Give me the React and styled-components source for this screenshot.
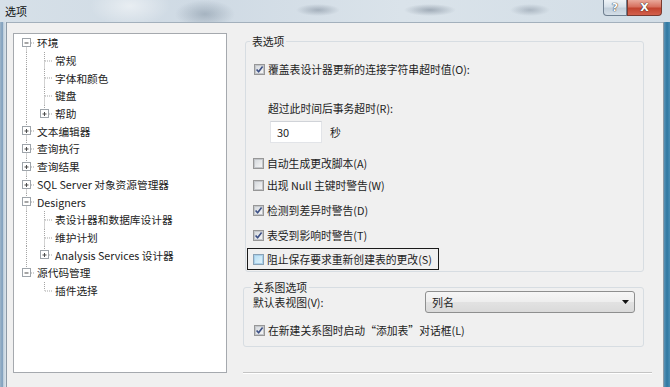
import React from 'react';
import styled, { createGlobalStyle } from 'styled-components';

const Global = createGlobalStyle`
  html, body { margin: 0; padding: 0; background: #f0f0f0; }
  body {
    font-family: "Noto Sans CJK SC", "Noto Sans", sans-serif;
    font-size: 11px;
    color: #1e1e1e;
  }
  * { box-sizing: border-box; }
`;

const Window = styled.div`
  width: 670px;
  height: 387px;
  overflow: hidden;
  display: flex;
  flex-direction: column;
  background: #d3dee7;
`;

const TitleBar = styled.div`
  height: 22px;
  flex: none;
  display: flex;
  align-items: flex-start;
  padding: 0 8px 0 5px;
  background:
    radial-gradient(ellipse 30px 14px at 205px 14px, rgba(70, 90, 110, 0.30), transparent),
    radial-gradient(ellipse 22px 6px at 318px 10px, rgba(60, 75, 95, 0.32), transparent),
    radial-gradient(ellipse 26px 6px at 430px 10px, rgba(60, 75, 95, 0.36), transparent),
    radial-gradient(ellipse 20px 6px at 530px 10px, rgba(60, 75, 95, 0.28), transparent),
    radial-gradient(ellipse 40px 20px at 130px 6px, rgba(255, 255, 255, 0.5), transparent),
    linear-gradient(90deg, #d6e0e8 0%, #cfdae4 30%, #dae3ea 60%, #d2dde6 100%);
`;

const TitleText = styled.div`
  flex: 1;
  line-height: 23px;
  font-size: 11px;
  color: #111;
`;

const CaptionButton = styled.div`
  width: ${p => p.$w}px;
  height: 16px;
  display: flex;
  align-items: center;
  justify-content: center;
  font-family: "DejaVu Sans", sans-serif;
  font-weight: bold;
  font-size: 11px;
  color: #fff;
  text-shadow: 0 0 1px #2a2a2a, 0 0 1px #2a2a2a;
  border: 1px solid ${p => (p.$close ? '#7a3a30' : '#6f7f90')};
  border-top: none;
  border-radius: ${p => (p.$close ? '0 0 4px 0' : '0 0 0 4px')};
  background: ${p =>
    p.$close
      ? 'linear-gradient(#e9a99b 0%, #d7715f 45%, #c2442f 55%, #d3604d 100%)'
      : 'linear-gradient(#eef3f7 0%, #d7e1ea 45%, #c2cfdb 55%, #d4dee7 100%)'};
`;

const Frame = styled.div`
  flex: 1;
  display: flex;
  min-height: 0;
`;

const Edge = styled.div`
  width: 7px;
  flex: none;
  background: ${p => p.$bg};
  border-${p => (p.$side === 'left' ? 'right' : 'left')}: 1px solid #8d9aa6;
`;

const Client = styled.div`
  flex: 1;
  background: #f0f0f0;
  border-top: 1px solid #a3b0bc;
  display: grid;
  grid-template-columns: 214px 409px;
  column-gap: 16px;
  align-items: start;
  padding: 10px 0 0 6px;
`;

/* ---------- Tree ---------- */

const TreePanel = styled.div`
  height: 340px;
  background: #fff;
  border: 1px solid #a5a9ae;
  padding: 0 0 0 3px;
  display: flex;
  flex-direction: column;
`;

const TreeRow = styled.div`
  height: 17.7px;
  display: flex;
  align-items: center;
  white-space: nowrap;
`;

const TreeLabel = styled.span`
  margin-left: 1px;
  padding: 0 1px;
  font-size: 10.7px;
  line-height: 15px;
  color: #222;
`;

const H = 17.7;
const C = 8.5;

function Connector({ top, bottom, box }) {
  return (
    <svg width="18" height={H} viewBox={`0 0 18 ${H}`} style={{ flex: 'none', display: 'block' }}>
      <g stroke="#a3a3a3" strokeWidth="1" strokeDasharray="1 1" fill="none">
        {top && <line x1="9.5" y1="0" x2="9.5" y2={C} />}
        {bottom && <line x1="9.5" y1={C} x2="9.5" y2={H} />}
        <line x1="10" y1={C + 0.5} x2="18" y2={C + 0.5} />
      </g>
      {box && (
        <g>
          <rect x="5.5" y={C - 4} width="8" height="8" fill="#fff" stroke="#9ea4aa" />
          <line x1="7.5" y1={C + 0.5} x2="11.5" y2={C + 0.5} stroke="#4a4a4a" />
          {box === 'plus' && <line x1="9.5" y1={C - 1.5} x2="9.5" y2={C + 2.5} stroke="#4a4a4a" />}
        </g>
      )}
    </svg>
  );
}

function Guide({ on }) {
  return (
    <svg width="18" height={H} viewBox={`0 0 18 ${H}`} style={{ flex: 'none', display: 'block' }}>
      {on && (
        <line x1="9.5" y1="0" x2="9.5" y2={H} stroke="#a3a3a3" strokeDasharray="1 1" />
      )}
    </svg>
  );
}

const tree = [
  { label: '环境', guides: [], box: 'minus', top: false, next: true },
  { label: '常规', guides: [true], top: true, next: true },
  { label: '字体和颜色', guides: [true], top: true, next: true },
  { label: '键盘', guides: [true], top: true, next: true },
  { label: '帮助', guides: [true], box: 'plus', top: true, next: false },
  { label: '文本编辑器', guides: [], box: 'plus', top: true, next: true },
  { label: '查询执行', guides: [], box: 'plus', top: true, next: true },
  { label: '查询结果', guides: [], box: 'plus', top: true, next: true },
  { label: 'SQL Server 对象资源管理器', guides: [], box: 'plus', top: true, next: true },
  { label: 'Designers', guides: [], box: 'minus', top: true, next: true },
  { label: '表设计器和数据库设计器', guides: [true], top: true, next: true },
  { label: '维护计划', guides: [true], top: true, next: true },
  { label: 'Analysis Services 设计器', guides: [true], box: 'plus', top: true, next: false },
  { label: '源代码管理', guides: [], box: 'minus', top: true, next: false },
  { label: '插件选择', guides: [false], top: true, next: false },
];

/* ---------- Right side ---------- */

const RightColumn = styled.div`
  display: flex;
  flex-direction: column;
`;

const Group = styled.fieldset`
  margin: ${p => p.$mt}px 8px 0 ${p => p.$ml}px;
  padding: ${p => p.$pt}px 0 ${p => p.$pb}px 0;
  border: 1px solid #d7dde2;
  border-radius: 3px;
  min-width: 0;
  display: flex;
  flex-direction: column;
  align-items: flex-start;
`;

const Legend = styled.legend`
  margin-left: ${p => p.$ml}px;
  padding: 0 2px;
  line-height: 14px;
  font-size: 10.8px;
  color: #222;
`;

const CheckRow = styled.div`
  display: inline-flex;
  align-items: center;
  height: 22px;
  margin: ${p => p.$mt}px 0 0 ${p => p.$ml}px;
  padding: 0 6px 0 5px;
  border: 1px solid ${p => (p.$focus ? '#1a1a1a' : 'transparent')};
  white-space: nowrap;
  gap: 3px;
`;

const Text = styled.span`
  font-size: 10.8px;
  line-height: 15px;
  color: #222;
`;

const SubLabel = styled(Text)`
  display: block;
  margin: 20px 0 0 22px;
  line-height: 16px;
`;

const InputRow = styled.div`
  display: flex;
  align-items: center;
  gap: 8px;
  margin: 5px 0 0 24px;
`;

const NumberBox = styled.div`
  width: 52px;
  height: 22px;
  background: #fff;
  border: 1px solid #e2e4e8;
  border-top-color: #d0d3d8;
  padding-left: 6px;
  display: flex;
  align-items: center;
  font-size: 11px;
`;

const ViewRow = styled.div`
  align-self: stretch;
  display: flex;
  align-items: center;
  justify-content: space-between;
  height: 22px;
  margin: -3px 8px 0 9px;
`;

const Select = styled.div`
  width: 210px;
  height: 22px;
  border: 1px solid #8e8f8f;
  border-radius: 3px;
  background: linear-gradient(#f6f6f6 0%, #eeeeee 48%, #e2e2e2 52%, #dadada 100%);
  display: flex;
  align-items: center;
  justify-content: space-between;
  padding: 0 5px 0 6px;
  font-size: 11px;
`;

const Separator = styled.div`
  margin-top: 25px;
  height: 2px;
  border-top: 1px solid #c4c4c4;
  border-bottom: 1px solid #ffffff;
`;

function Check({ checked, hot }) {
  return (
    <svg width="11" height="11" viewBox="0 0 11 11" style={{ flex: 'none', display: 'block' }}>
      <defs>
        <linearGradient id="cbg" x1="0" y1="0" x2="1" y2="1">
          <stop offset="0" stopColor="#d4d8dc" />
          <stop offset="1" stopColor="#f7f7f7" />
        </linearGradient>
        <linearGradient id="cbh" x1="0" y1="0" x2="1" y2="1">
          <stop offset="0" stopColor="#b6def4" />
          <stop offset="1" stopColor="#e2f3fc" />
        </linearGradient>
      </defs>
      <rect x="0.5" y="0.5" width="10" height="10" fill="#fff" stroke={hot ? '#8aa2b6' : '#979797'} />
      <rect x="1.5" y="1.5" width="8" height="8" fill={hot ? 'url(#cbh)' : 'url(#cbg)'} stroke={hot ? '#a9d0ea' : '#c3c6ca'} />
      {checked && (
        <path d="M2.6 5.4 L4.6 7.8 L8.6 2.6" fill="none" stroke="#3b4f85" strokeWidth="1.6" strokeLinejoin="round" />
      )}
    </svg>
  );
}

function Arrow() {
  return (
    <svg width="7" height="4" viewBox="0 0 7 4" style={{ display: 'block' }}>
      <path d="M0 0 H7 L3.5 4 Z" fill="#111" />
    </svg>
  );
}

export default function App() {
  return (
    <>
      <Global />
      <Window>
        <TitleBar>
          <TitleText>选项</TitleText>
          <CaptionButton $w={24}>?</CaptionButton>
          <CaptionButton $w={35} $close>X</CaptionButton>
        </TitleBar>
        <Frame>
          <Edge $side="left" $bg="linear-gradient(90deg, #9fb6ca 0%, #7f9fbd 40%, #c3d2de 60%, #dbe4eb 100%)" />
          <Client>
            <TreePanel>
              {tree.map(item => (
                <TreeRow key={item.label}>
                  {item.guides.map((g, i) => (
                    <Guide key={i} on={g} />
                  ))}
                  <Connector top={item.top} bottom={item.next} box={item.box} />
                  <TreeLabel>{item.label}</TreeLabel>
                </TreeRow>
              ))}
            </TreePanel>

            <RightColumn>
              <Group $mt={1} $ml={2} $pt={0} $pb={1}>
                <Legend $ml={4}>表选项</Legend>
                <CheckRow $mt={10} $ml={2}>
                  <Check checked />
                  <Text>覆盖表设计器更新的连接字符串超时值(O):</Text>
                </CheckRow>
                <SubLabel>超过此时间后事务超时(R):</SubLabel>
                <InputRow>
                  <NumberBox>30</NumberBox>
                  <Text>秒</Text>
                </InputRow>
                <CheckRow $mt={9} $ml={1}>
                  <Check />
                  <Text>自动生成更改脚本(A)</Text>
                </CheckRow>
                <CheckRow $mt={0} $ml={1}>
                  <Check />
                  <Text>出现 Null 主键时警告(W)</Text>
                </CheckRow>
                <CheckRow $mt={3} $ml={1}>
                  <Check checked />
                  <Text>检测到差异时警告(D)</Text>
                </CheckRow>
                <CheckRow $mt={3} $ml={1}>
                  <Check checked />
                  <Text>表受到影响时警告(T)</Text>
                </CheckRow>
                <CheckRow $mt={2} $ml={1} $focus>
                  <Check hot />
                  <Text>阻止保存要求重新创建表的更改(S)</Text>
                </CheckRow>
              </Group>

              <Group $mt={8} $ml={0} $pt={0} $pb={5}>
                <Legend $ml={7}>关系图选项</Legend>
                <ViewRow>
                  <Text>默认表视图(V):</Text>
                  <Select>
                    <span>列名</span>
                    <Arrow />
                  </Select>
                </ViewRow>
                <CheckRow $mt={6} $ml={4}>
                  <Check checked />
                  <Text>在新建关系图时启动“添加表”对话框(L)</Text>
                </CheckRow>
              </Group>

              <Separator />
            </RightColumn>
          </Client>
          <Edge $side="right" $bg="linear-gradient(90deg, #5c93b5 0%, #2f78a2 50%, #4a8db3 100%)" />
        </Frame>
      </Window>
    </>
  );
}
